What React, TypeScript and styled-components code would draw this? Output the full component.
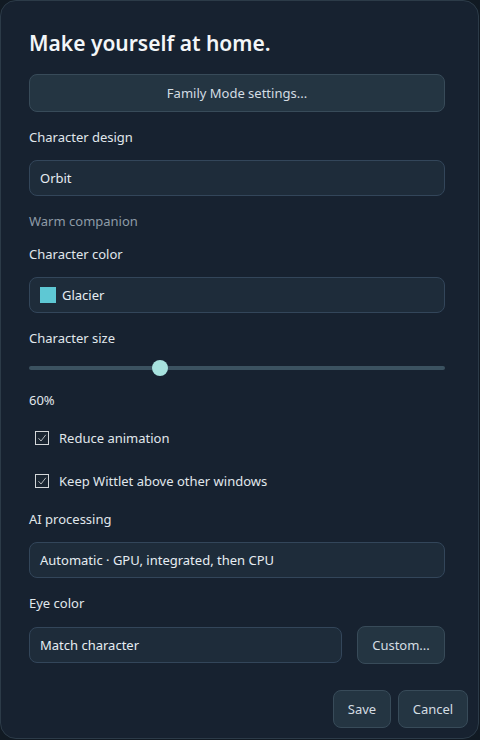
import React from 'react';
import styled, { createGlobalStyle } from 'styled-components';

const GlobalStyle = createGlobalStyle`
  html, body {
    margin: 0;
    padding: 0;
    background: #111a23;
  }
  body {
    font-family: 'Segoe UI', 'Noto Sans', 'Open Sans', sans-serif;
    color: #e2e9ee;
  }
`;

const Dialog = styled.div`
  box-sizing: border-box;
  width: 479px;
  height: 739px;
  background: #172230;
  border: 1px solid #2c3b48;
  border-radius: 16px;
  display: flex;
  flex-direction: column;
`;

const Content = styled.div`
  display: flex;
  flex-direction: column;
  padding: 0 33px 0 28px;
`;

const Title = styled.h1`
  margin: 27px 0 0;
  font-size: 21px;
  line-height: 30px;
  font-weight: 600;
  color: #f3f6f8;
`;

const WideButton = styled.button`
  margin-top: 16px;
  height: 38px;
  background: #243542;
  border: 1px solid #384b59;
  border-radius: 8px;
  color: #d4dde3;
  font-family: inherit;
  font-size: 13px;
`;

const Label = styled.div<{ $gap?: number; $muted?: boolean }>`
  margin-top: ${(p) => p.$gap ?? 15}px;
  font-size: 13px;
  line-height: 20px;
  color: ${(p) => (p.$muted ? '#8e9ba7' : '#e0e7ec')};
`;

const Field = styled.div<{ $grow?: boolean }>`
  box-sizing: border-box;
  height: 36px;
  margin-top: 13px;
  display: flex;
  align-items: center;
  gap: 6px;
  padding: 0 10px;
  background: #1e2c3a;
  border: 1px solid #33465a;
  border-radius: 8px;
  font-size: 13px;
  color: #e6edf2;
  ${(p) => (p.$grow ? 'flex: 1; margin-top: 0;' : '')}
`;

const Swatch = styled.span<{ $color: string }>`
  width: 16px;
  height: 16px;
  background: ${(p) => p.$color};
`;

const SliderWrap = styled.div`
  position: relative;
  height: 20px;
  margin-top: 10px;
  display: flex;
  align-items: center;
`;

const Track = styled.div`
  flex: 1;
  height: 4px;
  border-radius: 2px;
  background: #3b5260;
`;

const Thumb = styled.div`
  position: absolute;
  top: 2px;
  width: 16px;
  height: 16px;
  margin-left: -8px;
  border-radius: 50%;
  background: #a7e2de;
`;

const CheckRow = styled.label<{ $gap: number }>`
  margin-top: ${(p) => p.$gap}px;
  height: 20px;
  display: flex;
  align-items: center;
  gap: 10px;
  padding-left: 6px;
  font-size: 13px;
  color: #e0e7ec;
`;

const Box = styled.span`
  box-sizing: border-box;
  width: 14px;
  height: 14px;
  border: 1px solid #d4d7d9;
  background: #1a2531;
  display: flex;
  align-items: center;
  justify-content: center;
`;

const Row = styled.div`
  margin-top: 13px;
  display: flex;
  align-items: center;
  gap: 15px;
`;

const Button = styled.button<{ $w: number }>`
  width: ${(p) => p.$w}px;
  height: 38px;
  padding: 0;
  background: #243542;
  border: 1px solid #384b59;
  border-radius: 8px;
  color: #d4dde3;
  font-family: inherit;
  font-size: 13px;
`;

const Footer = styled.div`
  margin-top: 26px;
  display: flex;
  justify-content: flex-end;
  gap: 7px;
  padding-right: 10px;
`;

const Checkbox: React.FC<{ label: string; gap: number }> = ({ label, gap }) => (
  <CheckRow $gap={gap}>
    <Box>
      <svg width="10" height="10" viewBox="0 0 10 10">
        <path d="M1.5 5.2 L4 8 L8.8 1.8" fill="none" stroke="#b4b8bb" strokeWidth="1" />
      </svg>
    </Box>
    <span>{label}</span>
  </CheckRow>
);

const App: React.FC = () => {
  const sizePct = 31.5;
  return (
    <>
      <GlobalStyle />
      <Dialog>
        <Content>
          <Title>Make yourself at home.</Title>
          <WideButton>Family Mode settings...</WideButton>

          <Label>Character design</Label>
          <Field>Orbit</Field>
          <Label $muted>Warm companion</Label>

          <Label $gap={13}>Character color</Label>
          <Field>
            <Swatch $color="#5ec8d4" />
            <span>Glacier</span>
          </Field>

          <Label>Character size</Label>
          <SliderWrap>
            <Track />
            <Thumb style={{ left: `${sizePct}%` }} />
          </SliderWrap>
          <Label $gap={12}>60%</Label>

          <Checkbox label="Reduce animation" gap={18} />
          <Checkbox label="Keep Wittlet above other windows" gap={23} />

          <Label $gap={18}>AI processing</Label>
          <Field>Automatic · GPU, integrated, then CPU</Field>

          <Label>Eye color</Label>
          <Row>
            <Field $grow>Match character</Field>
            <Button $w={88}>Custom...</Button>
          </Row>
        </Content>
        <Footer>
          <Button $w={58}>Save</Button>
          <Button $w={70}>Cancel</Button>
        </Footer>
      </Dialog>
    </>
  );
};

export default App;
